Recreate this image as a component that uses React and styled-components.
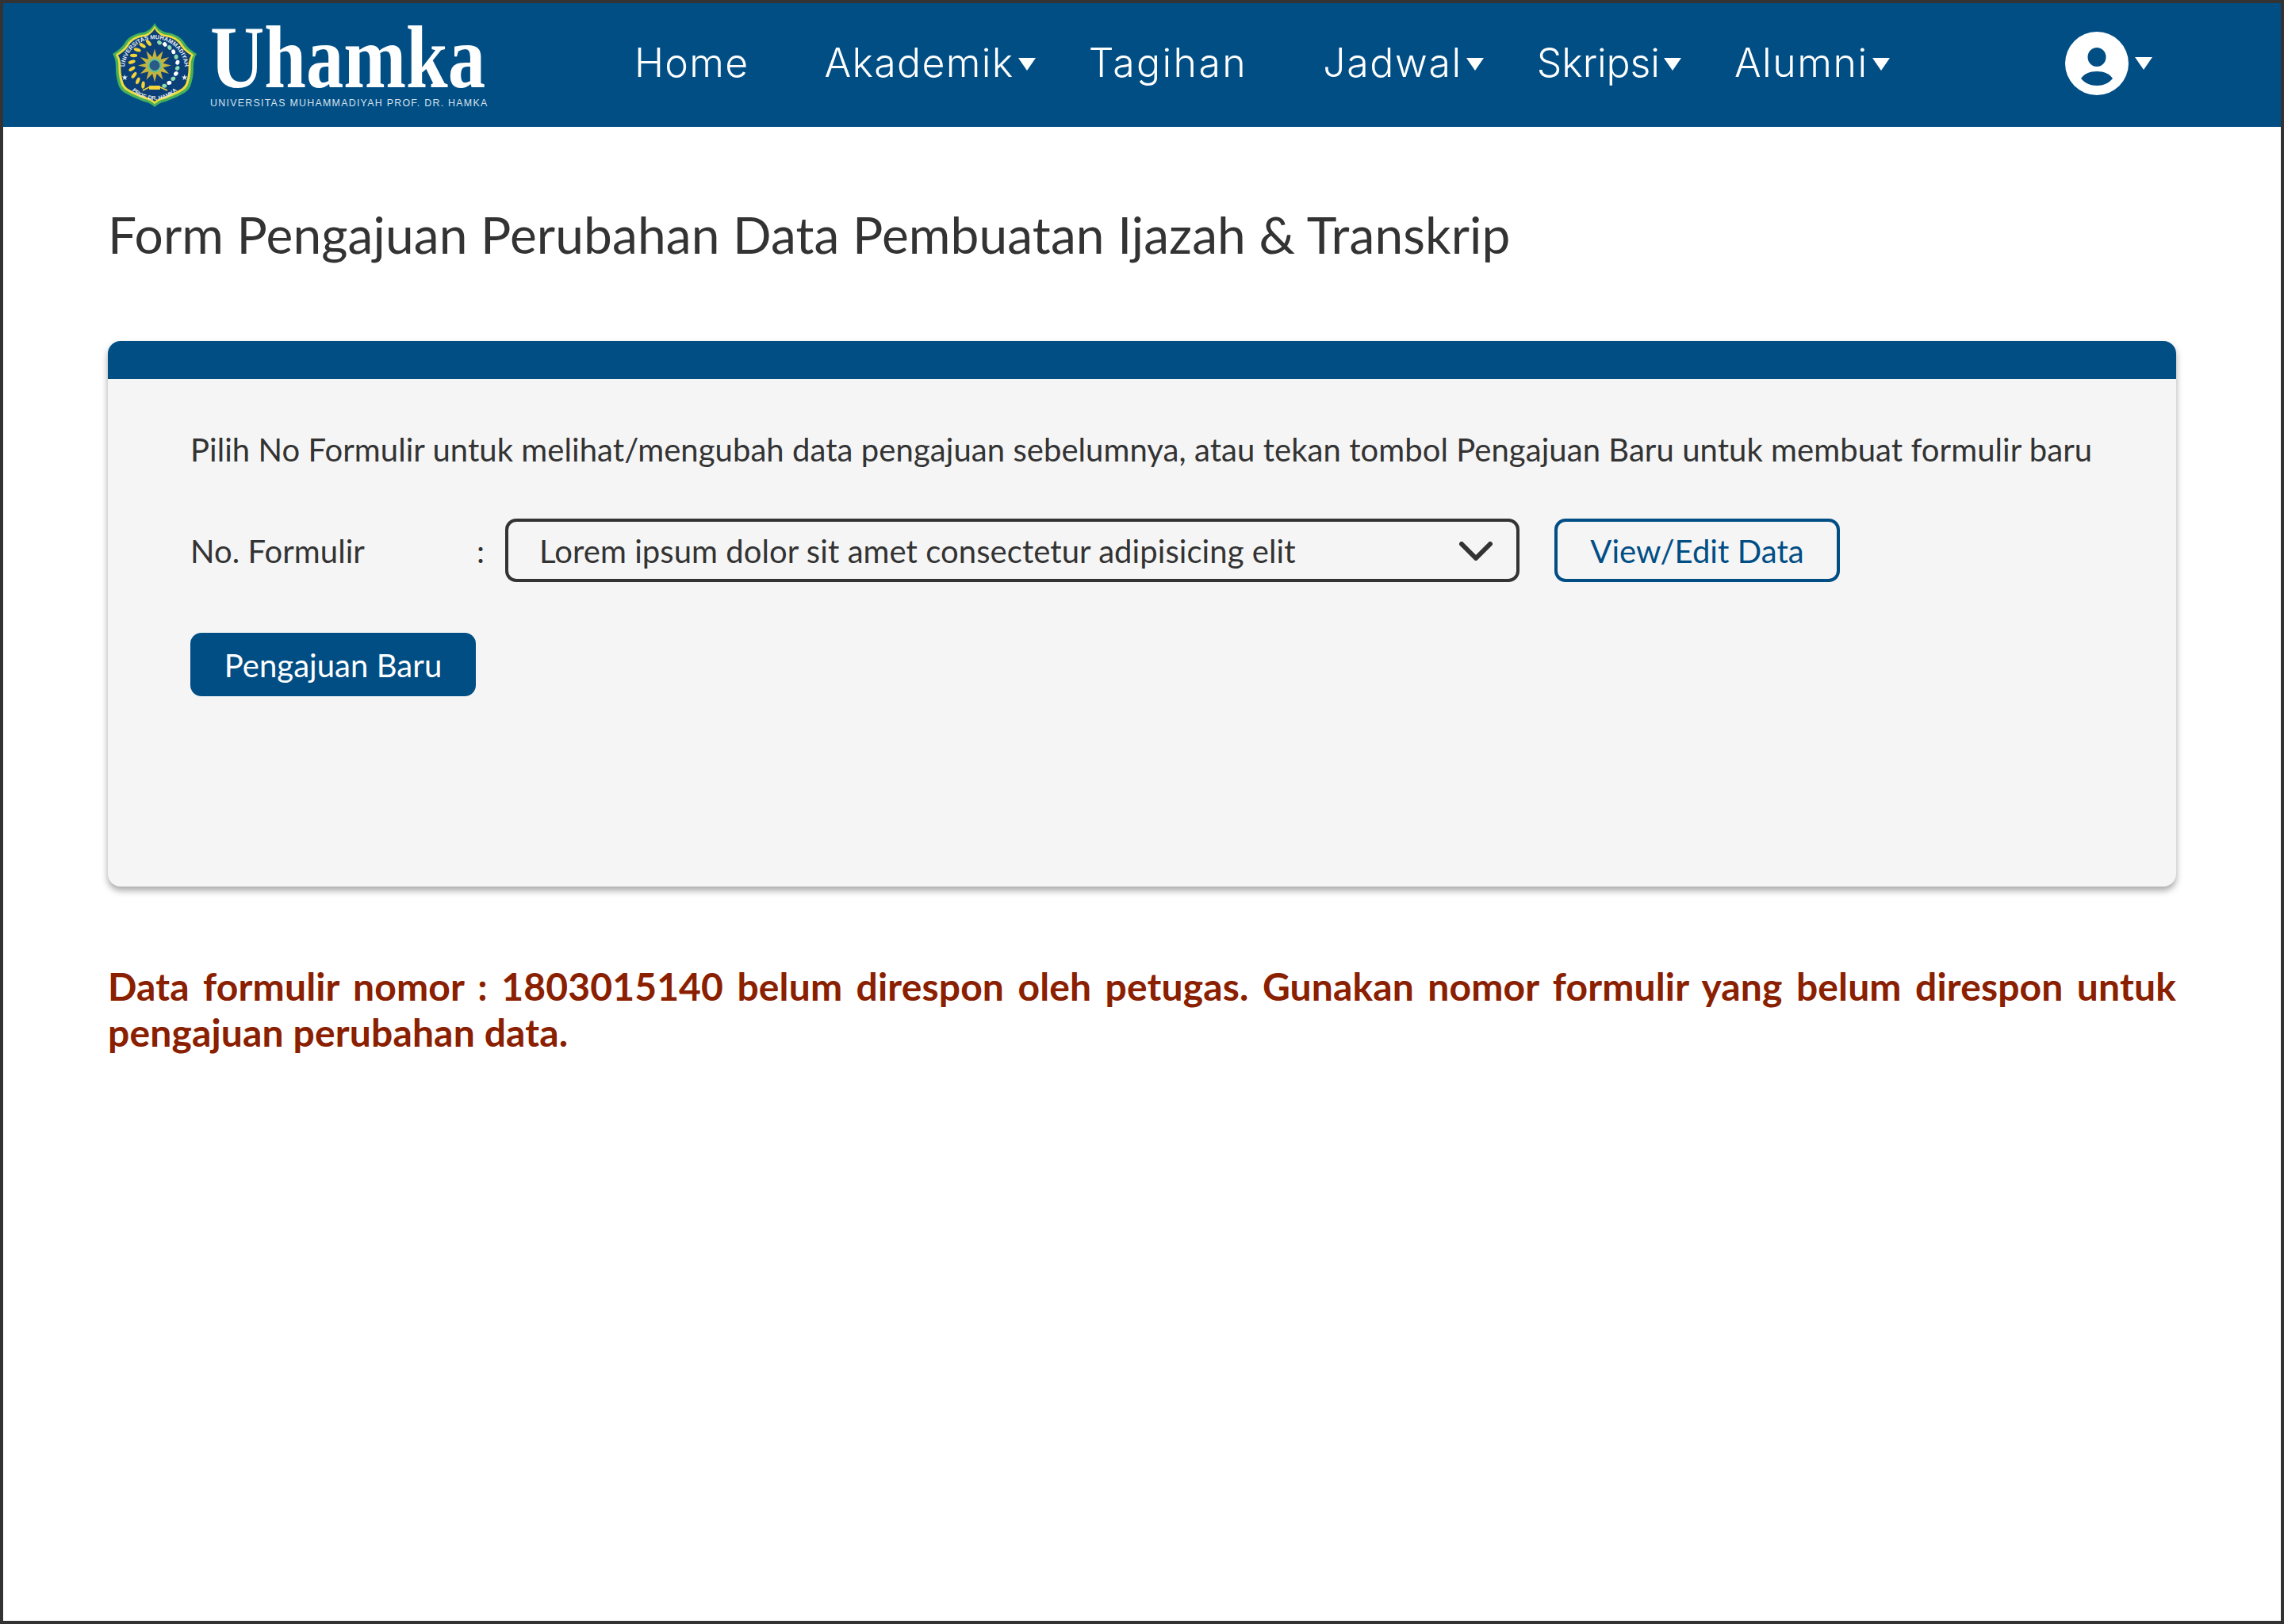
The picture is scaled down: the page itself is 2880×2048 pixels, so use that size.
import React from "react";
import styled, { createGlobalStyle } from "styled-components";

const NAVY = "#014e85";
const INK = "#333333";

const GlobalStyle = createGlobalStyle`
  html, body {
    margin: 0;
    padding: 0;
    background: #fff;
  }
  * {
    box-sizing: border-box;
  }
`;

const Page = styled.div`
  width: 2880px;
  height: 2048px;
  border: 4px solid ${INK};
  background: #fff;
  font-family: Lato, "Liberation Sans", sans-serif;
  color: ${INK};
`;

const Header = styled.header`
  height: 156px;
  background: ${NAVY};
  display: flex;
  align-items: center;
  padding: 0 162px 0 138px;
`;

const Logo = styled.div`
  display: flex;
  align-items: center;
  gap: 17px;
  margin-right: 185px;
`;

const LogoWords = styled.div`
  display: flex;
  flex-direction: column;
  width: 350px;
  gap: 13px;
  margin-top: 6px;
`;

const Tagline = styled.span`
  font-family: "Liberation Sans", sans-serif;
  font-size: 12.4px;
  line-height: 11px;
  letter-spacing: 1.27px;
  color: #d5e0ea;
  white-space: nowrap;
`;

const Nav = styled.nav`
  display: flex;
  align-items: center;
  flex: 1;
  padding-bottom: 6px;
`;

const NavItem = styled.a`
  display: flex;
  align-items: center;
  gap: 5px;
  margin-right: ${(p) => (p.$plain ? 95 : 67)}px;
  font-family: Inter, "Liberation Sans", sans-serif;
  font-weight: 300;
  font-size: 50px;
  line-height: 60px;
  letter-spacing: ${(p) => p.$spacing}px;
  color: #fff;
  white-space: nowrap;
`;

const Caret = styled.span`
  width: 0;
  height: 0;
  border-left: 11px solid transparent;
  border-right: 11px solid transparent;
  border-top: 16px solid #fff;
`;

const NavCaret = styled(Caret)`
  margin-top: 3px;
`;

const Account = styled.div`
  display: flex;
  align-items: center;
  gap: 8px;
  margin-top: -4px;
`;

const Main = styled.main`
  padding: 0 132px;
`;

const Title = styled.h1`
  margin: 0;
  padding-top: 97px;
  height: 270px;
  font-size: 64px;
  line-height: 78px;
  font-weight: 400;
  letter-spacing: 0.12px;
  color: ${INK};
`;

const Card = styled.section`
  height: 688px;
  background: #f5f5f5;
  border-radius: 16px;
  box-shadow: 0 5px 8px rgba(0, 0, 0, 0.35);
  overflow: hidden;
`;

const CardBar = styled.div`
  height: 48px;
  background: ${NAVY};
`;

const CardBody = styled.div`
  padding: 64px 104px 0;
  letter-spacing: 0.065px;
`;

const Hint = styled.p`
  margin: 0 0 62px;
  font-size: 40px;
  line-height: 50px;
  white-space: nowrap;
`;

const FormRow = styled.div`
  display: flex;
  align-items: center;
  margin-bottom: 64px;
`;

const Label = styled.label`
  width: 361px;
  padding-top: 2px;
  font-size: 40px;
`;

const Colon = styled.span`
  width: 36px;
  padding-top: 2px;
  font-size: 40px;
`;

const SelectBox = styled.div`
  width: 1279px;
  height: 80px;
  display: flex;
  align-items: center;
  justify-content: space-between;
  padding: 2px 30px 0 39px;
  border: 4px solid ${INK};
  border-radius: 14px;
  font-size: 40px;
`;

const ActionButton = styled.button`
  height: 80px;
  width: 360px;
  border-radius: 14px;
  font-family: Lato, "Liberation Sans", sans-serif;
  font-size: 40px;
  letter-spacing: 0.065px;
  padding: 2px 0 0;
  border: 4px solid ${NAVY};
  background: ${(p) => (p.$filled ? NAVY : "transparent")};
  color: ${(p) => (p.$filled ? "#fff" : NAVY)};
  margin-left: ${(p) => (p.$filled ? 0 : 44)}px;
`;

const Message = styled.p`
  margin: 97px 0 0;
  font-size: 48px;
  line-height: 58px;
  font-weight: 700;
  letter-spacing: 0.15px;
  color: #8a2000;
  text-align: justify;
`;

// emblem leaves sit on a circle round the sun, angle counted from the top
const wreath = (side, count, from, to) =>
  Array.from({ length: count }, (_, i) => {
    const deg = from + ((to - from) * i) / (count - 1);
    const a = (deg * Math.PI) / 180;
    return {
      i,
      x: 53 + side * 29 * Math.sin(a),
      y: 53 - 29 * Math.cos(a),
      rot: side * (deg + 25),
    };
  });

const sunPoints = Array.from({ length: 24 }, (_, i) => {
  const a = (i * 15 * Math.PI) / 180;
  const r = i % 2 ? 11 : 21;
  return `${(53 + r * Math.sin(a)).toFixed(1)},${(53.5 - r * Math.cos(a)).toFixed(1)}`;
}).join(" ");

const SHIELD =
  "M53 0C56 6 62 11 68 12C78 13 86 18 90 24C94 31 100 35 106 39C102 45 102 52 102 58C102 66 100 74 98 80C95 86 91 88 87 90C80 94 73 96 67 99C61 100 56 103 53 106C50 103 45 100 39 99C33 96 26 94 19 90C15 88 11 86 8 80C6 74 4 66 4 58C4 52 4 45 0 39C6 35 12 31 16 24C20 18 28 13 38 12C44 11 50 6 53 0Z";

const Emblem = () => (
  <svg width="106" height="106" viewBox="0 0 106 106">
    <defs>
      <path id="arcTop" d="M16.3 68A38 38 0 1 1 89.7 68" />
      <path id="arcBottom" d="M19 78A40 40 0 0 0 87 78" />
    </defs>
    <path d={SHIELD} fill="#46b05a" />
    <g transform="translate(53 53) scale(.93) translate(-53 -53)">
      <path d={SHIELD} fill="#f0dc3c" />
    </g>
    <g transform="translate(53 53) scale(.87) translate(-53 -53)">
      <path d={SHIELD} fill="#0b3f78" />
    </g>
    <text fontFamily="Liberation Sans, sans-serif" fontSize="7.4" fontWeight="700" fill="#e8eef4">
      <textPath href="#arcTop" startOffset="50%" textAnchor="middle">
        UNIVERSITAS MUHAMMADIYAH
      </textPath>
    </text>
    <text fontFamily="Liberation Sans, sans-serif" fontSize="7" fontWeight="700" fill="#e8eef4">
      <textPath href="#arcBottom" startOffset="50%" textAnchor="middle">
        PROF. DR. HAMKA
      </textPath>
    </text>
    {wreath(-1, 9, 15, 150).map((l) => (
      <ellipse
        key={`l${l.i}`}
        cx={l.x}
        cy={l.y}
        rx="2.2"
        ry="4.6"
        fill="#f0d43a"
        transform={`rotate(${l.rot} ${l.x} ${l.y})`}
      />
    ))}
    {wreath(1, 11, 12, 155).map((l) => (
      <ellipse
        key={`r${l.i}`}
        cx={l.x}
        cy={l.y}
        rx="3"
        ry="2.5"
        fill={l.i % 2 ? "#ffffff" : "#8fdcae"}
        transform={`rotate(${l.rot} ${l.x} ${l.y})`}
      />
    ))}
    <polygon points={sunPoints} fill="#c6b43c" />
    <circle cx="53" cy="53.5" r="9" fill="#6cc28e" />
    <circle cx="53" cy="53.5" r="6.5" fill="#2b5a86" />
    <polygon points="15.3,65 16.2,67.6 19,67.6 16.8,69.3 17.6,72 15.3,70.4 13,72 13.8,69.3 11.6,67.6 14.4,67.6" fill="#e8eef4" />
    <polygon points="90.7,65 91.6,67.6 94.4,67.6 92.2,69.3 93,72 90.7,70.4 88.4,72 89.2,69.3 87,67.6 89.8,67.6" fill="#e8eef4" />
    <rect x="46" y="79" width="14" height="5" rx="1" fill="#f0d43a" />
    <path d="M46 81L38 85M60 81L69 85" stroke="#f0d43a" strokeWidth="1.6" />
  </svg>
);

const Wordmark = () => (
  <svg width="350" height="78" viewBox="0 0 350 78" overflow="visible">
    <text
      x="0"
      y="76"
      fontFamily="Liberation Serif, serif"
      fontWeight="700"
      fontSize="112"
      fill="#fff"
      textLength="347"
      lengthAdjust="spacingAndGlyphs"
    >
      Uhamka
    </text>
  </svg>
);

const UserIcon = () => (
  <svg width="80" height="80" viewBox="0 0 80 80">
    <circle cx="40" cy="40" r="40" fill="#fff" />
    <ellipse cx="40" cy="32" rx="11.5" ry="12" fill={NAVY} />
    <path d="M20 59C24 53 31 50 40 50C49 50 56 53 60 59C55 65 48 68 40 68C32 68 25 65 20 59Z" fill={NAVY} />
  </svg>
);

const ChevronIcon = () => (
  <svg width="42" height="24" viewBox="0 0 42 24">
    <path d="M3 3L21 21L39 3" fill="none" stroke={INK} strokeWidth="6" strokeLinecap="round" strokeLinejoin="round" />
  </svg>
);

const navItems = [
  { label: "Home", plain: true, spacing: 1.3 },
  { label: "Akademik", caret: true, spacing: 1.35 },
  { label: "Tagihan", plain: true, spacing: 2.4 },
  { label: "Jadwal", caret: true, spacing: 1.65 },
  { label: "Skripsi", caret: true, spacing: -0.1 },
  { label: "Alumni", caret: true, spacing: 1.55 },
];

export default function App() {
  return (
    <>
      <GlobalStyle />
      <Page>
        <Header>
          <Logo>
            <Emblem />
            <LogoWords>
              <Wordmark />
              <Tagline>UNIVERSITAS MUHAMMADIYAH PROF. DR. HAMKA</Tagline>
            </LogoWords>
          </Logo>
          <Nav>
            {navItems.map((item) => (
              <NavItem key={item.label} $plain={item.plain} $spacing={item.spacing}>
                {item.label}
                {item.caret && <NavCaret />}
              </NavItem>
            ))}
          </Nav>
          <Account>
            <UserIcon />
            <Caret />
          </Account>
        </Header>
        <Main>
          <Title>Form Pengajuan Perubahan Data Pembuatan Ijazah &amp; Transkrip</Title>
          <Card>
            <CardBar />
            <CardBody>
              <Hint>
                Pilih No Formulir untuk melihat/mengubah data pengajuan sebelumnya, atau tekan tombol Pengajuan Baru untuk membuat formulir baru
              </Hint>
              <FormRow>
                <Label>No. Formulir</Label>
                <Colon>:</Colon>
                <SelectBox>
                  Lorem ipsum dolor sit amet consectetur adipisicing elit
                  <ChevronIcon />
                </SelectBox>
                <ActionButton>View/Edit Data</ActionButton>
              </FormRow>
              <ActionButton $filled>Pengajuan Baru</ActionButton>
            </CardBody>
          </Card>
          <Message>
            Data formulir nomor : 1803015140 belum direspon oleh petugas. Gunakan nomor formulir yang belum direspon untuk pengajuan perubahan data.
          </Message>
        </Main>
      </Page>
    </>
  );
}
